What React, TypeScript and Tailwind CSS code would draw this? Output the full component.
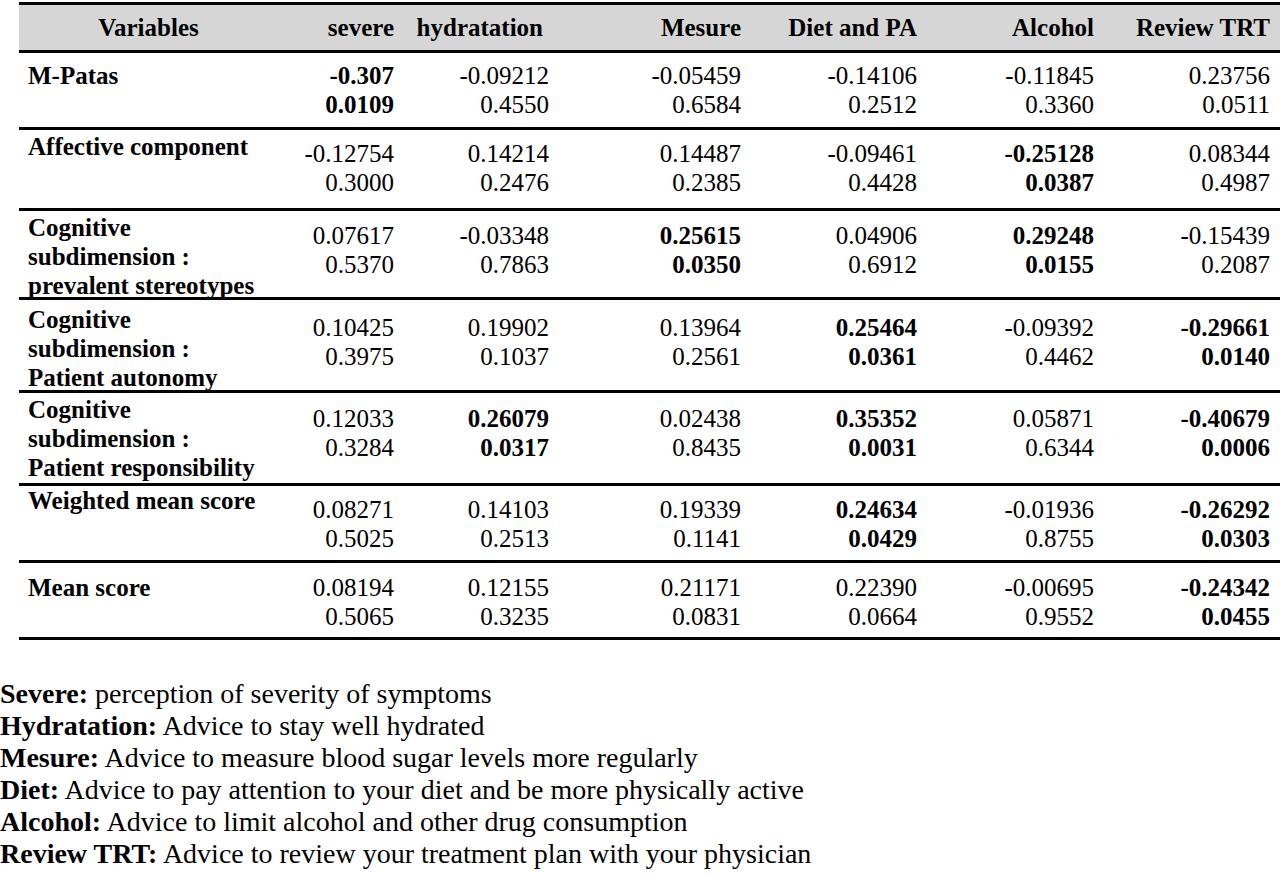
import React from "react";

type Cell = [string, string, boolean];

interface RowDef {
  label: React.ReactNode;
  cells: Cell[];
  rowCls: string;
  labelCls: string;
  valCls: string;
}

const grid =
  "grid grid-cols-[259px_126px_155px_192px_176px_177px_176px] border-b-[3px] border-black";

const rows: RowDef[] = [
  {
    label: "M-Patas",
    rowCls: "h-[77px]",
    labelCls: "pt-[8px]",
    valCls: "pt-[8px]",
    cells: [
      ["-0.307", "0.0109", true],
      ["-0.09212", "0.4550", false],
      ["-0.05459", "0.6584", false],
      ["-0.14106", "0.2512", false],
      ["-0.11845", "0.3360", false],
      ["0.23756", "0.0511", false],
    ],
  },
  {
    label: "Affective component",
    rowCls: "h-[81px]",
    labelCls: "pt-[2px]",
    valCls: "pt-[9px]",
    cells: [
      ["-0.12754", "0.3000", false],
      ["0.14214", "0.2476", false],
      ["0.14487", "0.2385", false],
      ["-0.09461", "0.4428", false],
      ["-0.25128", "0.0387", true],
      ["0.08344", "0.4987", false],
    ],
  },
  {
    label: (
      <>
        Cognitive
        <br />
        subdimension :
        <br />
        prevalent stereotypes
      </>
    ),
    rowCls: "h-[89px]",
    labelCls: "pt-[2px]",
    valCls: "pt-[10px]",
    cells: [
      ["0.07617", "0.5370", false],
      ["-0.03348", "0.7863", false],
      ["0.25615", "0.0350", true],
      ["0.04906", "0.6912", false],
      ["0.29248", "0.0155", true],
      ["-0.15439", "0.2087", false],
    ],
  },
  {
    label: (
      <>
        Cognitive
        <br />
        subdimension :
        <br />
        Patient autonomy
      </>
    ),
    rowCls: "h-[93px]",
    labelCls: "pt-[5px]",
    valCls: "pt-[13px]",
    cells: [
      ["0.10425", "0.3975", false],
      ["0.19902", "0.1037", false],
      ["0.13964", "0.2561", false],
      ["0.25464", "0.0361", true],
      ["-0.09392", "0.4462", false],
      ["-0.29661", "0.0140", true],
    ],
  },
  {
    label: (
      <>
        Cognitive
        <br />
        subdimension :
        <br />
        Patient responsibility
      </>
    ),
    rowCls: "h-[93px]",
    labelCls: "pt-[2px]",
    valCls: "pt-[11px]",
    cells: [
      ["0.12033", "0.3284", false],
      ["0.26079", "0.0317", true],
      ["0.02438", "0.8435", false],
      ["0.35352", "0.0031", true],
      ["0.05871", "0.6344", false],
      ["-0.40679", "0.0006", true],
    ],
  },
  {
    label: "Weighted mean score",
    rowCls: "h-[77px]",
    labelCls: "pt-0",
    valCls: "pt-[9px]",
    cells: [
      ["0.08271", "0.5025", false],
      ["0.14103", "0.2513", false],
      ["0.19339", "0.1141", false],
      ["0.24634", "0.0429", true],
      ["-0.01936", "0.8755", false],
      ["-0.26292", "0.0303", true],
    ],
  },
  {
    label: "Mean score",
    rowCls: "h-[77px]",
    labelCls: "pt-[10px]",
    valCls: "pt-[10px]",
    cells: [
      ["0.08194", "0.5065", false],
      ["0.12155", "0.3235", false],
      ["0.21171", "0.0831", false],
      ["0.22390", "0.0664", false],
      ["-0.00695", "0.9552", false],
      ["-0.24342", "0.0455", true],
    ],
  },
];

const headers = ["severe", "hydratation", "Mesure", "Diet and PA", "Alcohol", "Review TRT"];

const legend: [string, string][] = [
  ["Severe:", "perception of severity of symptoms"],
  ["Hydratation:", "Advice to stay well hydrated"],
  ["Mesure:", "Advice to measure blood sugar levels more regularly"],
  ["Diet:", "Advice to pay attention to your diet and be more physically active"],
  ["Alcohol:", "Advice to limit alcohol and other drug consumption"],
  ["Review TRT:", "Advice to review your treatment plan with your physician"],
];

export default function App() {
  return (
    <div className="w-[1280px] h-[876px] bg-white text-black font-['Liberation_Serif','Times_New_Roman',serif] overflow-hidden pt-[2px]">
      <div className="ml-[19px] w-[1261px] text-[25px] leading-[29px]">
        <div className={`${grid} h-[51px] border-t-[3px] bg-[#d6d6d6] font-bold`}>
          <div className="pt-[8px] text-center">Variables</div>
          {headers.map((h, i) => (
            <div
              key={h}
              className={
                i === 1
                  ? "pt-[8px] pr-[16px] text-right"
                  : "pt-[8px] pr-[10px] text-right"
              }
            >
              {h}
            </div>
          ))}
        </div>
        {rows.map((r, ri) => (
          <div key={ri} className={`${grid} ${r.rowCls}`}>
            <div className={`${r.labelCls} pl-[9px] font-bold whitespace-nowrap`}>
              {r.label}
            </div>
            {r.cells.map((c, ci) => (
              <div
                key={ci}
                className={`${r.valCls} pr-[10px] text-right ${c[2] ? "font-bold" : ""}`}
              >
                <div>{c[0]}</div>
                <div>{c[1]}</div>
              </div>
            ))}
          </div>
        ))}
      </div>
      <div className="mt-[38px] text-[28px] leading-[32px]">
        {legend.map(([b, t]) => (
          <div key={b} className="whitespace-nowrap">
            <span className="font-bold">{b}</span> {t}
          </div>
        ))}
      </div>
    </div>
  );
}
